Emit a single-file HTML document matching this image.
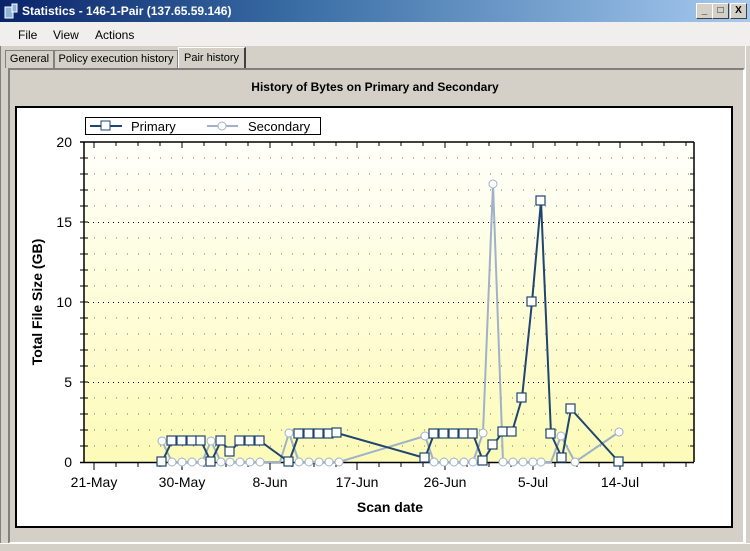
<!DOCTYPE html>
<html><head><meta charset="utf-8"><style>
body{margin:0;width:750px;height:551px;overflow:hidden;background:#d4d0c8;font-family:"Liberation Sans",Tahoma,sans-serif;position:relative}
.title{position:absolute;left:0;top:0;width:750px;height:22px;background:linear-gradient(to right,#0a246a,#3a6ea5 40%,#a6caf0);color:#fff;font-weight:bold;font-size:12px;line-height:22px}
.title span{position:absolute;left:22px;top:0}
.btn{position:absolute;top:3px;width:15px;height:14px;background:#d4d0c8;border:1px solid;border-color:#fff #404040 #404040 #fff;font-size:10px;color:#000;text-align:center;line-height:14px;font-weight:bold}
.menu{position:absolute;left:0;top:22px;width:750px;height:24px;background:#f0efed;font-size:12px}
.menu span{position:absolute;top:6px}
.tab{position:absolute;font-size:11px;border:1px solid #808080;border-bottom:none;background:#d4d0c8;padding:0;text-align:center;white-space:nowrap;box-sizing:border-box}
</style></head><body>
<div style="position:absolute;left:0;top:0;width:750px;height:551px;box-sizing:border-box;border:1px solid #808080;border-right-color:#404040"></div>
<div class="title"><svg style="position:absolute;left:4px;top:3px" width="15" height="16"><rect x="1" y="4" width="8" height="11" fill="#8fb3d9" stroke="#fff"/><rect x="8" y="1" width="5" height="8" fill="#8fb3d9" stroke="#fff"/></svg><span>Statistics - 146-1-Pair (137.65.59.146)</span>
<div class="btn" style="left:696px">_</div><div class="btn" style="left:712px">□</div><div class="btn" style="left:730px">X</div></div>
<div class="menu"><span style="left:18px">File</span><span style="left:53px">View</span><span style="left:95px">Actions</span></div>
<div class="tab" style="left:5px;top:50px;width:49px;height:18px;line-height:17px">General</div>
<div class="tab" style="left:54px;top:50px;width:124px;height:18px;line-height:17px">Policy execution history</div>
<div class="tab" style="left:178px;top:47px;width:68px;height:21px;line-height:20px;border-color:#fff #404040 #404040 #fff;border-width:1px 2px 0 1px">Pair history</div>
<div style="position:absolute;left:8px;top:68px;width:737px;height:476px;box-sizing:border-box;border:2px solid;border-color:#808080 #fff #fff #808080"></div>
<div style="position:absolute;left:745px;top:46px;width:5px;height:505px;background:#d4d0c8;border-left:1px solid #fff;box-sizing:border-box"></div>
<div style="position:absolute;left:0;top:543px;width:750px;height:8px;border-top:1px solid #fff;box-sizing:border-box;background:#d4d0c8"></div>
<div style="position:absolute;left:0;top:80px;width:750px;text-align:center;font-weight:bold;font-size:12px">History of Bytes on Primary and Secondary</div>
<div style="position:absolute;left:15px;top:106px;width:718px;height:422px;box-sizing:border-box;background:#fff;border:2px solid #000"></div>
<svg style="position:absolute;left:0;top:0" width="750" height="551">
<defs><linearGradient id="g" x1="0" y1="0" x2="0" y2="1"><stop offset="0" stop-color="#fffffb"/><stop offset="1" stop-color="#fdfbb8"/></linearGradient></defs>
<rect x="84" y="142" width="610" height="320" fill="url(#g)"/>
<g stroke="#777" stroke-width="1" stroke-dasharray="1,10">
<line x1="94" y1="158" x2="694" y2="158"/><line x1="94" y1="174" x2="694" y2="174"/><line x1="94" y1="190" x2="694" y2="190"/><line x1="94" y1="206" x2="694" y2="206"/>
<line x1="94" y1="238" x2="694" y2="238"/><line x1="94" y1="254" x2="694" y2="254"/><line x1="94" y1="270" x2="694" y2="270"/><line x1="94" y1="286" x2="694" y2="286"/>
<line x1="94" y1="318" x2="694" y2="318"/><line x1="94" y1="334" x2="694" y2="334"/><line x1="94" y1="350" x2="694" y2="350"/><line x1="94" y1="366" x2="694" y2="366"/>
<line x1="94" y1="398" x2="694" y2="398"/><line x1="94" y1="414" x2="694" y2="414"/><line x1="94" y1="430" x2="694" y2="430"/><line x1="94" y1="446" x2="694" y2="446"/>
</g>
<g stroke="#000" stroke-width="1" stroke-dasharray="1,4">
<line x1="88" y1="222.5" x2="694" y2="222.5"/><line x1="88" y1="302.5" x2="694" y2="302.5"/><line x1="88" y1="382.5" x2="694" y2="382.5"/>
</g>
<g stroke="#000" stroke-width="1.5" fill="none">
<line x1="80" y1="142" x2="694" y2="142"/><line x1="80" y1="462.5" x2="694" y2="462.5"/>
<line x1="84" y1="142" x2="84" y2="462"/><line x1="694" y1="142" x2="694" y2="462"/>
</g>
<g stroke="#000" stroke-width="1">
<path d="M80 158h8M80 174h8M80 190h8M80 206h8M80 222h8M80 238h8M80 254h8M80 270h8M80 286h8M80 302h8M80 318h8M80 334h8M80 350h8M80 366h8M80 382h8M80 398h8M80 414h8M80 430h8M80 446h8"/>
<path d="M690 158h4M690 174h4M690 190h4M690 206h4M690 222h4M690 238h4M690 254h4M690 270h4M690 286h4M690 302h4M690 318h4M690 334h4M690 350h4M690 366h4M690 382h4M690 398h4M690 414h4M690 430h4M690 446h4"/>
<path d="M94 462v8M182 462v8M270 462v8M357 462v8M445 462v8M533 462v8M620 462v8"/>
<path d="M116 462v5M138 462v5M160 462v5M204 462v5M226 462v5M248 462v5M292 462v5M314 462v5M336 462v5M379 462v5M401 462v5M423 462v5M467 462v5M489 462v5M511 462v5M555 462v5M577 462v5M599 462v5M642 462v5M664 462v5M686 462v5"/>
<path d="M94 142v6M116 142v4M138 142v4M160 142v4M182 142v6M204 142v4M226 142v4M248 142v4M270 142v6M292 142v4M314 142v4M336 142v4M357 142v6M379 142v4M401 142v4M423 142v4M445 142v6M467 142v4M489 142v4M511 142v4M533 142v6M555 142v4M577 142v4M599 142v4M620 142v6M642 142v4M664 142v4M686 142v4"/>
</g>
<polyline fill="none" stroke="#9fb2c8" stroke-width="2" points="162,441 172,462 182,462 192,462 202,462 211,441 221,462 230,462 240,462 250,462 260,462 270,462 280,462 289,433 299,462 309,462 319,462 329,462 339,462 425,436 434,462 444,462 454,462 464,462 473,462 483,433 493,184 503,462 513,462 523,462 533,462 541,462 551,462 561,436 575,462 619,432"/>
<g fill="#fff" stroke="#9fb2c8" stroke-width="1">
<circle cx="162" cy="441" r="4"/><circle cx="172" cy="462" r="4"/><circle cx="182" cy="462" r="4"/><circle cx="192" cy="462" r="4"/><circle cx="202" cy="462" r="4"/><circle cx="211" cy="441" r="4"/><circle cx="221" cy="462" r="4"/><circle cx="230" cy="462" r="4"/><circle cx="240" cy="462" r="4"/><circle cx="250" cy="462" r="4"/><circle cx="260" cy="462" r="4"/><circle cx="289" cy="433" r="4"/><circle cx="299" cy="462" r="4"/><circle cx="309" cy="462" r="4"/><circle cx="319" cy="462" r="4"/><circle cx="329" cy="462" r="4"/><circle cx="339" cy="462" r="4"/><circle cx="425" cy="436" r="4"/><circle cx="434" cy="462" r="4"/><circle cx="444" cy="462" r="4"/><circle cx="454" cy="462" r="4"/><circle cx="464" cy="462" r="4"/><circle cx="473" cy="462" r="4"/><circle cx="483" cy="433" r="4"/><circle cx="493" cy="184" r="4"/><circle cx="503" cy="462" r="4"/><circle cx="513" cy="462" r="4"/><circle cx="523" cy="462" r="4"/><circle cx="533" cy="462" r="4"/><circle cx="541" cy="462" r="4"/><circle cx="561" cy="436" r="4"/><circle cx="575" cy="462" r="4"/><circle cx="619" cy="432" r="4"/></g>
<polyline fill="none" stroke="#1f4570" stroke-width="2" points="162,462 172,441 182,441 192,441 201,441 211,462 221,441 230,452 240,441 250,441 260,441 289,462 299,434 309,434 319,434 329,434 337,433 425,458 434,434 444,434 454,434 464,434 473,434 483,461 493,445 503,432 512,432 522,398 532,302 541,201 551,434 562,458 571,409 619,462"/>
<g fill="#fff" stroke="#1f4570" stroke-width="1.2">
<rect x="157" y="457" width="9" height="9"/><rect x="167" y="436" width="9" height="9"/><rect x="177" y="436" width="9" height="9"/><rect x="187" y="436" width="9" height="9"/><rect x="196" y="436" width="9" height="9"/><rect x="206" y="457" width="9" height="9"/><rect x="216" y="436" width="9" height="9"/><rect x="225" y="447" width="9" height="9"/><rect x="235" y="436" width="9" height="9"/><rect x="245" y="436" width="9" height="9"/><rect x="255" y="436" width="9" height="9"/><rect x="284" y="457" width="9" height="9"/><rect x="294" y="429" width="9" height="9"/><rect x="304" y="429" width="9" height="9"/><rect x="314" y="429" width="9" height="9"/><rect x="324" y="429" width="9" height="9"/><rect x="332" y="428" width="9" height="9"/><rect x="420" y="453" width="9" height="9"/><rect x="429" y="429" width="9" height="9"/><rect x="439" y="429" width="9" height="9"/><rect x="449" y="429" width="9" height="9"/><rect x="459" y="429" width="9" height="9"/><rect x="468" y="429" width="9" height="9"/><rect x="478" y="456" width="9" height="9"/><rect x="488" y="440" width="9" height="9"/><rect x="498" y="427" width="9" height="9"/><rect x="507" y="427" width="9" height="9"/><rect x="517" y="393" width="9" height="9"/><rect x="527" y="297" width="9" height="9"/><rect x="536" y="196" width="9" height="9"/><rect x="546" y="429" width="9" height="9"/><rect x="557" y="453" width="9" height="9"/><rect x="566" y="404" width="9" height="9"/><rect x="614" y="457" width="9" height="9"/>
</g>
<rect x="85.5" y="117.5" width="235" height="17" fill="#fff" stroke="#000"/>
<line x1="90" y1="126" x2="122" y2="126" stroke="#1f4570" stroke-width="2"/><rect x="101" y="121" width="9" height="9" fill="#fff" stroke="#1f4570"/>
<line x1="207" y1="126" x2="238" y2="126" stroke="#9fb2c8" stroke-width="2"/><circle cx="222" cy="126" r="4" fill="#fff" stroke="#9fb2c8"/>
<g font-family="Liberation Sans,Arial,sans-serif" font-size="13" fill="#000">
<text x="131" y="131">Primary</text><text x="248" y="131">Secondary</text>
<g text-anchor="end" font-size="14"><text x="72" y="147">20</text><text x="72" y="227">15</text><text x="72" y="307">10</text><text x="72" y="387">5</text><text x="72" y="467">0</text></g>
<g text-anchor="middle" font-size="14"><text x="94" y="487">21-May</text><text x="182" y="487">30-May</text><text x="270" y="487">8-Jun</text><text x="357" y="487">17-Jun</text><text x="445" y="487">26-Jun</text><text x="533" y="487">5-Jul</text><text x="620" y="487">14-Jul</text></g>
<text x="390" y="512" text-anchor="middle" font-weight="bold" font-size="14">Scan date</text>
<text transform="translate(42,302) rotate(-90)" text-anchor="middle" font-weight="bold" font-size="14">Total File Size (GB)</text>
</g>
</svg>
</body></html>
